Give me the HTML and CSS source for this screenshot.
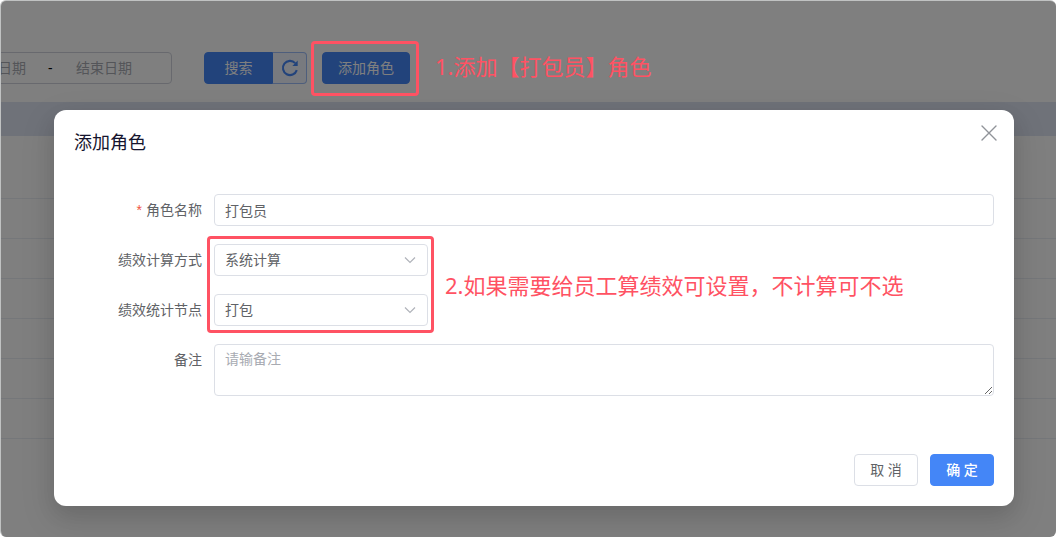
FILE: index.html
```html
<!DOCTYPE html>
<html lang="zh-CN">
<head>
<meta charset="utf-8">
<meta name="viewport" content="width=device-width, initial-scale=1">
<title>添加角色</title>
<link rel="stylesheet" href="styles.css">
</head>
<body>
<div class="frame">
  <main class="page">
    <div class="toolbar">
      <div class="date-range">
        <input class="date-input" type="text" placeholder="开始日期" aria-label="开始日期">
        <span class="date-sep">-</span>
        <input class="date-input" type="text" placeholder="结束日期" aria-label="结束日期">
      </div>
      <div class="search-group">
        <button class="btn btn-primary btn-search" type="button">搜索</button>
        <button class="btn btn-refresh" type="button" aria-label="刷新">
          <svg width="18" height="18" viewBox="0 0 18 18" fill="none" stroke="currentColor" stroke-width="2.1"><path d="M15.8 11.2A7.1 7.1 0 1 1 14.2 4.1"/><path d="M11.4 6.9H16.7V1.4Z" fill="currentColor" stroke="none"/></svg>
        </button>
      </div>
      <button class="btn btn-primary" type="button">添加角色</button>
    </div>
    <div class="table">
      <div class="table-head"></div>
      <div class="table-row table-row-tall"></div>
      <div class="table-row"></div>
      <div class="table-row"></div>
      <div class="table-row"></div>
      <div class="table-row"></div>
      <div class="table-row"></div>
      <div class="table-row"></div>
    </div>
  </main>
  <div class="overlay">
    <section class="dialog" role="dialog" aria-modal="true" aria-labelledby="dialog-title">
      <header class="dialog-head">
        <h1 class="dialog-title" id="dialog-title">添加角色</h1>
        <button class="close" type="button" aria-label="关闭">
          <svg width="16" height="16" viewBox="0 0 16 16" fill="none" stroke="currentColor" stroke-width="1.4" stroke-linecap="round"><path d="M1 1l14 14M15 1L1 15"/></svg>
        </button>
      </header>
      <form class="form">
        <div class="field">
          <label class="label" for="role-name"><span class="required">*</span>角色名称</label>
          <input class="control" id="role-name" type="text" value="打包员" required>
        </div>
        <div class="field-group">
          <div class="field">
            <label class="label" for="calc-method">绩效计算方式</label>
            <div class="select-wrap">
              <select class="control" id="calc-method"><option>系统计算</option></select>
              <svg class="chevron" width="12" height="8" viewBox="0 0 12 8" fill="none" stroke="currentColor" stroke-width="1.2"><path d="M1 1.5L6 6.5L11 1.5"/></svg>
            </div>
          </div>
          <div class="field">
            <label class="label" for="stat-node">绩效统计节点</label>
            <div class="select-wrap">
              <select class="control" id="stat-node"><option>打包</option></select>
              <svg class="chevron" width="12" height="8" viewBox="0 0 12 8" fill="none" stroke="currentColor" stroke-width="1.2"><path d="M1 1.5L6 6.5L11 1.5"/></svg>
            </div>
          </div>
          <div class="mark mark-selects"></div>
          <p class="note note-selects">2.如果需要给员工算绩效可设置，不计算可不选</p>
        </div>
        <div class="field">
          <label class="label" for="remark">备注</label>
          <textarea class="control control-area" id="remark" placeholder="请输备注"></textarea>
        </div>
        <footer class="actions">
          <button class="btn btn-plain" type="button">取 消</button>
          <button class="btn btn-primary btn-confirm" type="button">确 定</button>
        </footer>
      </form>
    </section>
  </div>
  <div class="mark mark-add"></div>
  <p class="note note-add">1.添加【打包员】角色</p>
</div>
</body>
</html>
```
FILE: styles.css
```css
* {
  box-sizing: border-box;
}

body {
  margin: 0;
  min-height: 100vh;
  display: flex;
  background: #fff;
  color: #606266;
  font: 14px/20px "Noto Sans", "Noto Sans CJK SC", sans-serif;
}

input,
select,
textarea,
button {
  font: inherit;
  color: inherit;
}

.frame {
  position: relative;
  flex: 1;
  min-width: 0;
  overflow: hidden;
  border: solid #c0c2c2;
  border-width: 1px 0 0 1px;
  border-radius: 6px;
}

.toolbar {
  display: flex;
  align-items: center;
  margin-left: -62px;
  padding: 51px 0 18px;
}

.date-range {
  display: flex;
  align-items: center;
  width: 233px;
  height: 32px;
  padding-left: 8px;
  border: 1px solid #d0d3dc;
  border-radius: 4px;
}

.date-input {
  width: 100px;
  padding: 0;
  border: 0;
  background: none;
  text-align: center;
}

.date-input::placeholder {
  color: #a8abb2;
  opacity: 1;
}

.date-sep {
  width: 6px;
  color: #000;
}

.search-group {
  display: flex;
  margin: 0 15px 0 32px;
}

.btn {
  height: 32px;
  padding: 0 15px;
  border: 1px solid #dcdfe6;
  border-radius: 4px;
  background: #fff;
  white-space: nowrap;
}

.btn-primary {
  border-color: #4486f7;
  background: #4486f7;
  color: #fff;
}

.btn-search {
  width: 69px;
  padding: 0;
  border-radius: 4px 0 0 4px;
}

.btn-refresh {
  display: flex;
  align-items: center;
  justify-content: center;
  width: 34px;
  padding: 0;
  border-color: #9dbdf8;
  border-left: 0;
  border-radius: 0 4px 4px 0;
  background: #f0f4fe;
  color: #4486f7;
}

.table-head {
  height: 34px;
  background: #dfe5f3;
}

.table-row {
  height: 40px;
  border-bottom: 1px solid #ebeef5;
}

.table-row-tall {
  height: 63px;
}

.overlay {
  position: absolute;
  inset: -1px 0 0 0;
  padding: 110px 42px 31px 53px;
  background: rgba(0, 0, 0, 0.5);
}

.dialog {
  padding: 20px;
  border-radius: 12px;
  background: #fff;
  box-shadow: 0 12px 32px 4px rgba(0, 0, 0, 0.1), 0 8px 20px rgba(0, 0, 0, 0.08);
}

.dialog-head {
  display: flex;
  justify-content: space-between;
  align-items: flex-start;
  margin-bottom: 40px;
}

.dialog-title {
  margin: 0;
  font-size: 18px;
  font-weight: 400;
  line-height: 24px;
  color: #15142e;
}

.close {
  display: flex;
  margin: -5px -3px 0 0;
  padding: 0;
  border: 0;
  background: none;
  color: #909399;
}

.form,
.field-group {
  display: flex;
  flex-direction: column;
  gap: 18px;
}

.field-group {
  position: relative;
}

.field {
  display: flex;
}

.label {
  flex: none;
  width: 140px;
  padding-right: 12px;
  line-height: 32px;
  text-align: right;
}

.required {
  margin-right: 4px;
  color: #f05545;
  font-family: "Liberation Sans", sans-serif;
}

.control {
  flex: 1;
  width: 100%;
  height: 32px;
  min-width: 0;
  padding: 0 10px;
  border: 1px solid #dcdfe6;
  border-radius: 4px;
  background: #fff;
  appearance: none;
  outline: 0;
}

.control-area {
  height: 52px;
  padding-top: 4px;
  resize: vertical;
}

.control-area::placeholder {
  color: #a8abb2;
  opacity: 1;
}

.select-wrap {
  position: relative;
  width: 214px;
}

.chevron {
  position: absolute;
  top: 12px;
  right: 12px;
  color: #b0b3ba;
  pointer-events: none;
}

.actions {
  display: flex;
  justify-content: flex-end;
  gap: 12px;
  margin-top: 40px;
}

.actions .btn {
  width: 64px;
  padding: 0;
}

.btn-confirm {
  font-weight: 500;
}

.mark {
  position: absolute;
  border: 3px solid #ff5263;
  border-radius: 4px;
  pointer-events: none;
}

.note {
  position: absolute;
  margin: 0;
  color: #ff5263;
  font-size: 22px;
  line-height: 30px;
  white-space: nowrap;
}

.mark-add {
  top: 40px;
  left: 310px;
  width: 108px;
  height: 55px;
}

.note-add {
  top: 50px;
  left: 434px;
}

.mark-selects {
  top: -8px;
  left: 133px;
  width: 227px;
  height: 97px;
}

.note-selects {
  top: 26px;
  left: 371px;
}
```
